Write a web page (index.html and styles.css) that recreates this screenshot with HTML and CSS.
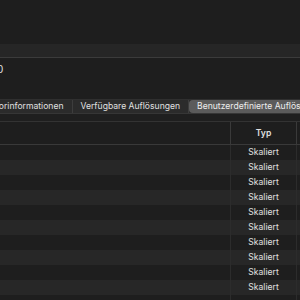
FILE: index.html
```html
<!DOCTYPE html>
<html lang="de">
<head>
    <meta charset="UTF-8">
    <title>Auflösungen</title>
    <link rel="stylesheet" href="styles.css">
</head>
<body>
    <div class="window">
        <div class="top"></div>
        <div class="band"></div>
        <div class="info">
            <span class="value">0</span>
        </div>

        <div class="tabs">
            <div class="tab first">Monitorinformationen</div>
            <div class="tab">Verfügbare Auflösungen</div>
            <div class="tab active">Benutzerdefinierte Auflösungen</div>
        </div>
        <div class="gap"></div>

        <div class="table">
            <div class="row head">
                <div class="cell name"></div>
                <div class="cell type">Typ</div>
                <div class="cell extra"></div>
            </div>
            <div id="rows"></div>
        </div>
    </div>

    <script>
        // Zeilen der Tabelle erzeugen
        const rows = document.getElementById('rows');
        for (let i = 0; i < 11; i++) {
            const label = i < 10 ? 'Skaliert' : '';
            rows.innerHTML += `
                <div class="row${i % 2 ? ' alt' : ''}">
                    <div class="cell name"></div>
                    <div class="cell type">${label}</div>
                    <div class="cell extra"></div>
                </div>`;
        }
    </script>
</body>
</html>
```

FILE: styles.css
```css
body { margin: 0; background: #1e1e1e; font-family: Inter, "Noto Sans", sans-serif; font-size: 8.6px; color: #e0e0e0; }
.window { width: 300px; height: 300px; overflow: hidden; }
.top { height: 44px; }
.band { height: 13px; background: #262626; border-bottom: 1px solid #3b3b3b; }
.info { height: 41px; padding-top: 5px; box-sizing: border-box; }
.value { display: block; margin-left: -3px; font-size: 10px; }
.tabs { display: flex; height: 13px; margin-left: -32px; background: #2b2b2b; border-top: 1px solid #2f2f2f; font-size: 8.6px; }
.tab { padding: 0 8px; line-height: 13px; white-space: nowrap; border-right: 1px solid #3d3d3d; }
.tab.active { background: #5b5b5b; border-radius: 4px 0 0 4px; border-right: none; color: #ededed; }
.gap { height: 7px; border-top: 1px solid #363636; border-bottom: 1px solid #333; background: #1f1f1f; }
.row { display: flex; height: 15px; }
.row.alt { background: #272727; }
.row.head { height: 22px; border-bottom: 1px solid #393939; background: #1e1e1e; }
.cell { line-height: 15px; }
.head .cell { line-height: 22px; font-weight: 600; }
.name { width: 230px; }
.type { width: 65px; text-align: center; border-left: 1px solid #2c2c2c; }
.extra { flex: 1; border-left: 1px solid #2c2c2c; }
.head .type, .head .extra { border-left-color: #3a3a3a; }
```
